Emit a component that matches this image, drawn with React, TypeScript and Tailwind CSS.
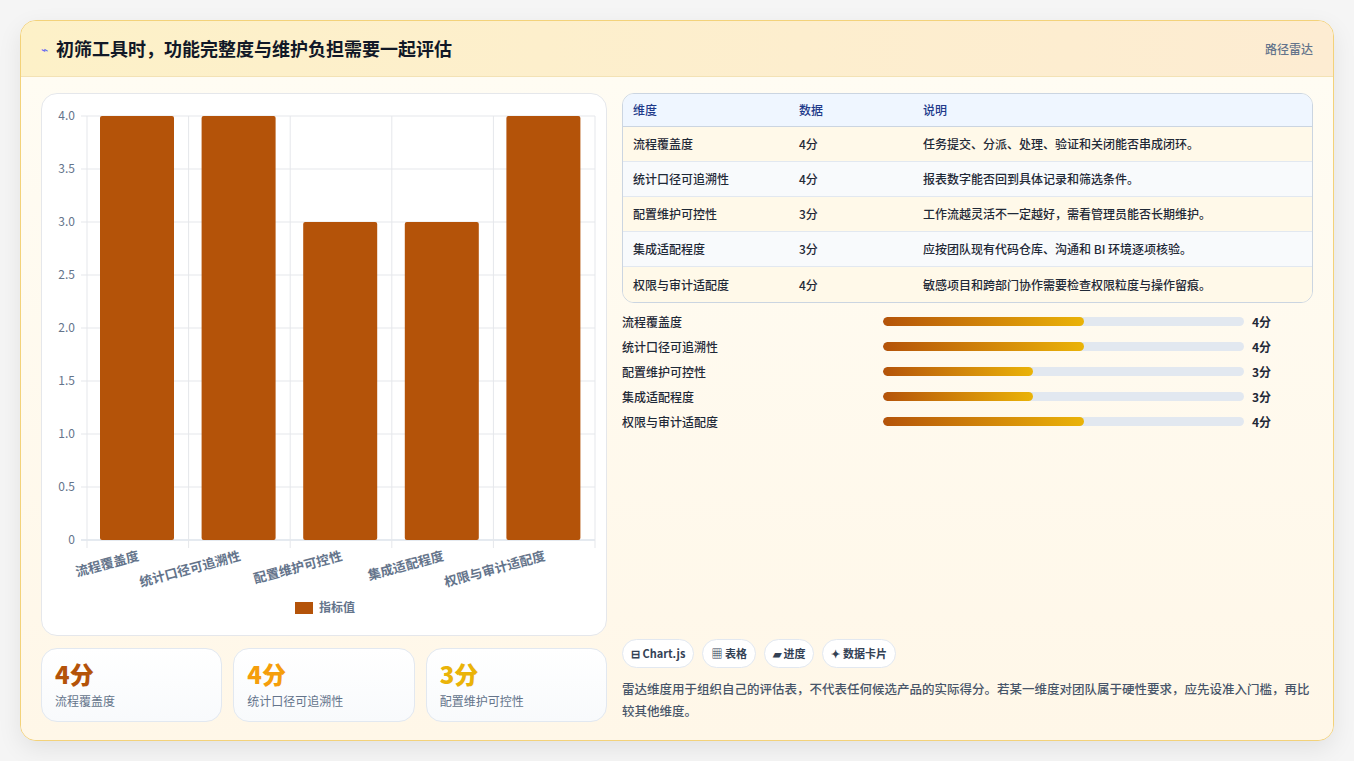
const F = { fontFamily: '"Noto Sans CJK SC","Noto Sans",sans-serif' };
const dims = [
  { n: '流程覆盖度', v: 4, d: '任务提交、分派、处理、验证和关闭能否串成闭环。' },
  { n: '统计口径可追溯性', v: 4, d: '报表数字能否回到具体记录和筛选条件。' },
  { n: '配置维护可控性', v: 3, d: '工作流越灵活不一定越好，需看管理员能否长期维护。' },
  { n: '集成适配程度', v: 3, d: '应按团队现有代码仓库、沟通和 BI 环境逐项核验。' },
  { n: '权限与审计适配度', v: 4, d: '敏感项目和跨部门协作需要检查权限粒度与操作留痕。' },
];

function Chart() {
  const L = 45, R = 553, T = 22, B = 446;
  const cw = (R - L) / 5;
  const y = (v: number) => B - (v / 4) * (B - T);
  const ticks = [0, 0.5, 1, 1.5, 2, 2.5, 3, 3.5, 4];
  return (
    <svg width="566" height="541" style={F}>
      {ticks.map((t) => (
        <g key={t}>
          <line x1={L - 6} x2={R} y1={y(t)} y2={y(t)} stroke={t === 0 ? '#cbd5e1' : '#e5e7eb'} />
          <text x={L - 12} y={y(t) + 4} textAnchor="end" fontSize="12" fill="#64748b">
            {t === 0 ? '0' : t.toFixed(1)}
          </text>
        </g>
      ))}
      {[0, 1, 2, 3, 4, 5].map((i) => (
        <line key={i} x1={L + i * cw} x2={L + i * cw} y1={T} y2={B + 8} stroke="#e5e7eb" />
      ))}
      {dims.map((d, i) => (
        <g key={d.n}>
          <rect x={L + i * cw + 13} y={y(d.v)} width={74} height={B - y(d.v)} rx="2" fill="#b45309" />
          <text
            x={L + (i + 0.5) * cw + 2}
            y={B + 20}
            textAnchor="end"
            fontSize="13"
            fontWeight="600"
            fill="#64748b"
            transform={`rotate(-15 ${L + (i + 0.5) * cw + 2} ${B + 20})`}
          >
            {d.n}
          </text>
        </g>
      ))}
      <rect x="253" y="508" width="18" height="12" fill="#b45309" />
      <text x="277" y="518" fontSize="12" fontWeight="600" fill="#64748b">指标值</text>
    </svg>
  );
}

export default function App() {
  const colors = ['#b45309', '#f59e0b', '#eab308'];
  return (
    <div className="w-[1354px] h-[761px] bg-[#f5f5f5] p-5" style={F}>
      <div className="h-[721px] rounded-2xl border border-[#f3d27a] bg-[#fff8eb] shadow-[0_8px_24px_rgba(0,0,0,0.08)] overflow-hidden flex flex-col">
        <div className="h-[56px] shrink-0 flex items-center justify-between px-5 bg-gradient-to-r from-[#fdf1c8] to-[#fdecd2] border-b border-[#f3e2b5]">
          <div className="flex items-center gap-2">
            <span className="text-[#6366f1] text-[12px]">⌁</span>
            <span className="text-[18px] font-bold text-[#111827]">初筛工具时，功能完整度与维护负担需要一起评估</span>
          </div>
          <span className="text-[12px] text-[#64748b] font-medium">路径雷达</span>
        </div>
        <div className="flex-1 flex gap-[15px] px-5 pt-4 pb-[18px] bg-gradient-to-b from-[#fffcf3] to-[#fff7e8]">
          <div className="w-[566px] flex flex-col gap-3">
            <div className="h-[543px] rounded-2xl border border-[#e5e7eb] bg-white overflow-hidden">
              <Chart />
            </div>
            <div className="flex gap-[11px]">
              {dims.slice(0, 3).map((d, i) => (
                <div key={d.n} className="flex-1 h-[74px] rounded-2xl border border-[#e2e8f0] bg-gradient-to-b from-white to-[#f8fafc] px-[13px] pt-[10px]">
                  <div className="text-[24px] font-extrabold leading-[30px]" style={{ color: colors[i] }}>{d.v}分</div>
                  <div className="text-[12px] text-[#64748b] mt-[3px]">{d.n}</div>
                </div>
              ))}
            </div>
          </div>
          <div className="flex-1 flex flex-col">
            <div className="rounded-xl border border-[#cbd5e1] overflow-hidden text-[12px] font-medium text-[#1f2937]">
              <div className="h-[33px] flex items-center px-[10px] bg-[#eff6ff] text-[#1e3a8a] border-b border-[#cbd5e1]">
                <div className="w-[166px]">维度</div><div className="w-[124px]">数据</div><div>说明</div>
              </div>
              {dims.map((d, i) => (
                <div key={d.n} className={`h-[35px] flex items-center px-[10px] ${i < 4 ? 'border-b border-[#e2e8f0]' : ''} ${i % 2 ? 'bg-[#f8fafc]' : 'bg-[#fff9e9]'}`}>
                  <div className="w-[166px]">{d.n}</div><div className="w-[124px]">{d.v}分</div><div>{d.d}</div>
                </div>
              ))}
            </div>
            <div className="mt-[10px] flex flex-col gap-[8px]">
              {dims.map((d) => (
                <div key={d.n} className="h-[17px] flex items-center text-[12px] font-medium text-[#1f2937]">
                  <div className="w-[261px]">{d.n}</div>
                  <div className="w-[361px] h-[9px] rounded-full bg-[#e2e8f0] overflow-hidden">
                    <div className="h-full rounded-full bg-gradient-to-r from-[#b45309] to-[#eab308]" style={{ width: `${(d.v / 7.2) * 100}%` }} />
                  </div>
                  <div className="ml-2 font-bold">{d.v}分</div>
                </div>
              ))}
            </div>
            <div className="flex-1" />
            <div className="flex gap-[8px] text-[11px] font-semibold text-[#334155]">
              {['⊟ Chart.js', '▦ 表格', '▰ 进度', '✦ 数据卡片'].map((c) => (
                <div key={c} className="h-[29px] px-[8px] flex items-center rounded-full border border-[#e2e8f0] bg-white">{c}</div>
              ))}
            </div>
            <p className="mt-[10px] text-[12.5px] leading-[22px] text-[#475569] font-medium">
              雷达维度用于组织自己的评估表，不代表任何候选产品的实际得分。若某一维度对团队属于硬性要求，应先设准入门槛，再比较其他维度。
            </p>
          </div>
        </div>
      </div>
    </div>
  );
}
